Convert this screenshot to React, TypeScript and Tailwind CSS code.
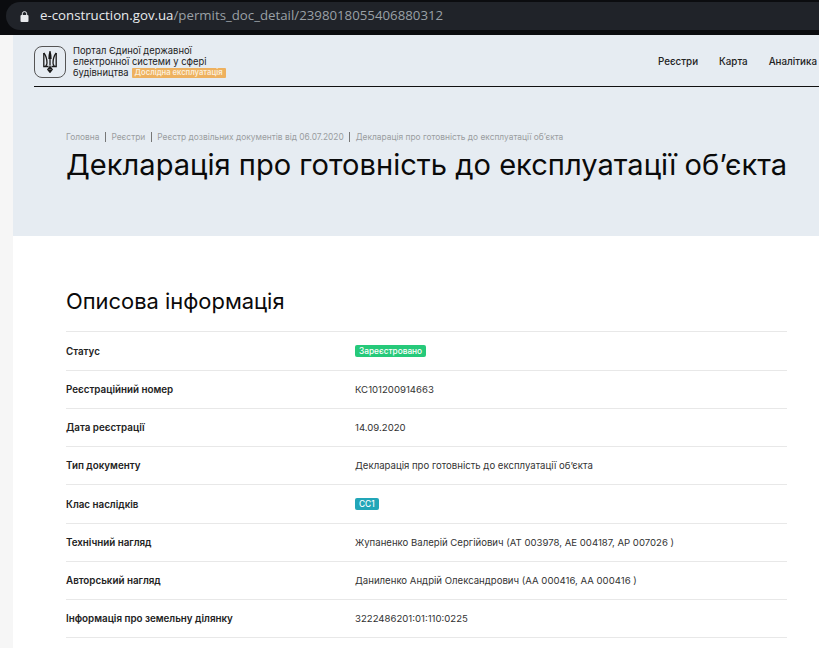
const rows: { label: string; value: string; badge?: string }[] = [
  { label: 'Статус', value: 'Зареєстровано', badge: 'bg-[#26c97a]' },
  { label: 'Реєстраційний номер', value: 'КС101200914663' },
  { label: 'Дата реєстрації', value: '14.09.2020' },
  { label: 'Тип документу', value: 'Декларація про готовність до експлуатації об’єкта' },
  { label: 'Клас наслідків', value: 'СС1', badge: 'bg-[#22a6b8]' },
  { label: 'Технічний нагляд', value: 'Жупаненко Валерій Сергійович (АТ 003978, АЕ 004187, АР 007026 )' },
  { label: 'Авторський нагляд', value: 'Даниленко Андрій Олександрович (АА 000416, АА 000416 )' },
  { label: 'Інформація про земельну ділянку', value: '3222486201:01:110:0225' },
];

const crumbs = ['Головна', 'Реєстри', 'Реєстр дозвільних документів від 06.07.2020', 'Декларація про готовність до експлуатації об’єкта'];

const Trident = () => (
  <svg width="14" height="22" viewBox="0 0 14 22" fill="none" stroke="#1a1a1a" strokeWidth="1.300">
    <path d="M7 0.500v14M6 8c0-3 .3-5 1-7.500C7.700 3 8 5 8 8" />
    <path d="M0.800 2v13.500h4.700M13.200 2v13.500H8.500" />
    <path d="M0.800 2c2 2.500 3.200 6 3.200 10 0 1-.4 2-1.200 3M13.200 2c-2 2.500-3.200 6-3.200 10 0 1 .4 2 1.200 3" />
    <path d="M7 15.500v6M4.800 18.500 7 21.300l2.200-2.800L7 15.500z" />
  </svg>
);

export default function App() {
  return (
    <div className="h-[648px] w-[819px] overflow-hidden bg-[#f6f6f6] font-['Inter',sans-serif]">
      <div className="flex h-[35px] items-start bg-[#0b0c0f] pl-[6px] pt-[2px]">
        <div className="flex h-[28px] w-full items-center rounded-l-[14px] bg-[#202329] pl-[14px] font-['Open_Sans',sans-serif] text-[13.250px]">
          <svg width="9" height="11" viewBox="0 0 9 11" fill="#e8eaed">
            <rect x="0.500" y="4" width="8" height="7" rx="1" />
            <path d="M2.300 4V2.800a2.200 2.200 0 0 1 4.400 0V4" fill="none" stroke="#e8eaed" strokeWidth="1" />
          </svg>
          <span className="ml-[11px] text-[#e8eaed]">e-construction.gov.ua</span>
          <span className="text-[#9aa0a6]">/permits_doc_detail/2398018055406880312</span>
        </div>
      </div>
      <div className="ml-[13px]">
        <div className="h-[201px] bg-[#e6ecf2]">
          <div className="ml-[21px] flex h-[52px] items-center border-b border-[#111] pr-[2px] pt-[2px]">
            <div className="flex h-[32px] w-[32px] items-center justify-center rounded-[8px] border border-[#555]">
              <Trident />
            </div>
            <div className="ml-[7px] text-[9.400px] leading-[11px] text-[#222]">
              <div>Портал Єдиної державної</div>
              <div>електронної системи у сфері</div>
              <div className="flex items-center">
                будівництва
                <span className="ml-[3px] rounded-[1px] bg-[#eeb15f] px-[3px] text-[7.600px] leading-[10px] font-semibold text-[#fbeeda]">Дослідна експлуатація</span>
              </div>
            </div>
            <nav className="ml-auto mt-[2px] flex gap-[21px] text-[9.800px] font-medium text-[#222]">
              <span>Реєстри</span>
              <span>Карта</span>
              <span>Аналітика</span>
            </nav>
          </div>
          <div className="ml-[53px] mt-[45px] flex items-center text-[8.400px] leading-[10px] text-[#9a9da0]">
            {crumbs.map((c, i) => (
              <span key={c} className="flex items-center">
                {i > 0 && <span className="mx-[5.500px] h-[10px] w-px bg-[#777]" />}
                {c}
              </span>
            ))}
          </div>
          <h1 className="ml-[53px] mt-[5px] whitespace-nowrap text-[29.100px] leading-[36px] font-normal text-[#0a0a0a]">Декларація про готовність до експлуатації об’єкта</h1>
        </div>
        <div className="h-[412px] bg-white px-[53px] pr-[32px] pt-[51px]">
          <h2 className="text-[21.900px] leading-[28px] font-normal text-[#0a0a0a]">Описова інформація</h2>
          <div className="mt-[16.450px] border-b border-[#e8e8e8]">
            {rows.map((r) => (
              <div key={r.label} className="flex h-[38.260px] items-center border-t border-[#e8e8e8] pt-[1px]">
                <div className="w-[289px] text-[9.800px] leading-[12px] font-semibold text-[#222]">{r.label}</div>
                {r.badge ? (
                  <span className={`-mt-[1px] rounded-[2px] px-[4px] text-[8.300px] leading-[12px] font-medium text-white ${r.badge}`}>{r.value}</span>
                ) : (
                  <div className="text-[9.600px] leading-[12px] text-[#333]">{r.value}</div>
                )}
              </div>
            ))}
          </div>
        </div>
      </div>
    </div>
  );
}
